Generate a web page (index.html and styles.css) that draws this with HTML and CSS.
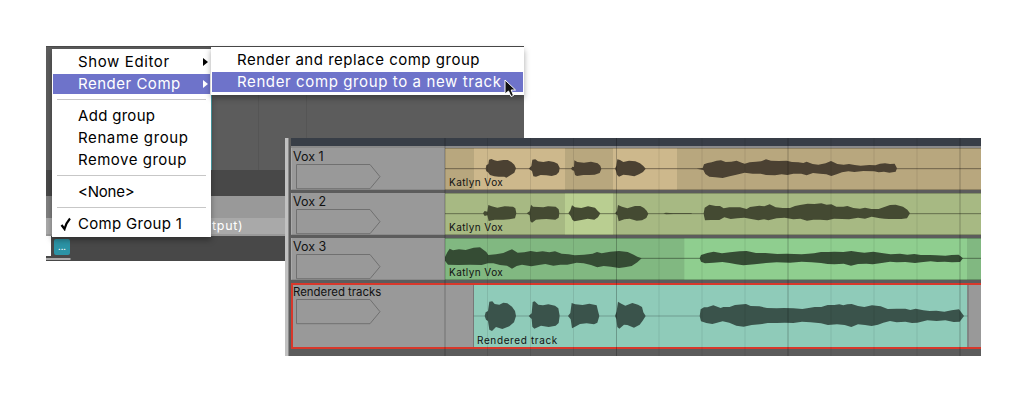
FILE: index.html
```
<!DOCTYPE html>
<html lang="en">
<head>
<meta charset="utf-8">
<title>Comp group rendering</title>
<link rel="stylesheet" href="styles.css">
</head>
<body>
<main class="desktop">
  <section class="mixer">
    <div class="mixer-canvas"></div>
    <div class="mixer-gap"></div>
    <div class="mixer-row"></div>
    <div class="mixer-output">tput)</div>
    <div class="mixer-foot"><span class="field"></span><button class="more">...</button></div>
    <div class="mixer-edge"></div>
  </section>

  <section class="arranger">
    <div class="ruler"></div>
    <div class="ruler-edge"></div>
    <div class="track">
      <header class="track-head"><span class="track-name n1">Vox 1</span><svg class="tag" viewBox="0 0 85 26"><path d="M.5.5H74L84 12.7 74 24.7H.5Z"/></svg></header>
      <div class="lane tan">
        <svg class="wave" viewBox="15 45 1608 126" preserveAspectRatio="none">
          <path fill="#cdb88c" d="M102 45H375V171H102ZM519 45H711V171H519Z"/>
          <path class="axis" d="M15 107H1623"/>
          <path d="M137 107L139 97 145 93 147 80 154 78 163 82 172 84 190 81 203 81 214 87 223 95 228 106 223 119 211 127 199 134 193 131 176 131 163 130 150 126 144 118 139 115Z"/>
          <path d="M266 107L274 99 277 80 286 79 294 85 310 87 326 84 342 87 353 92 359 104 357 117 349 125 335 129 319 127 302 126 288 131 280 130 276 114Z"/>
          <path d="M393 107L397 101 402 102 403 82 412 87 432 89 453 86 473 91 481 98 484 108 479 120 464 125 448 126 430 126 411 129 405 126 402 113 397 112Z"/>
          <path d="M525 107L529 98 532 79 540 81 550 87 567 83 586 85 600 91 610 99 617 107 609 117 597 124 583 130 565 127 550 125 537 131 531 125 528 113Z"/>
          <path transform="translate(660 0)" d="M110 107L128 105 132 94 143 90 155 88 170 83 183 82 197 87 214 86 230 83 245 89 254 92 269 88 288 86 303 85 318 79 333 83 356 84 380 83 396 87 415 88 430 90 440 86 458 93 475 95 497 91 513 84 532 93 551 95 567 93 584 96 602 98 628 96 646 97 660 92 675 91 690 93 704 92 711 106 707 116 688 119 672 116 656 118 642 115 610 114 583 117 565 115 546 118 530 124 514 129 499 124 480 122 459 120 440 127 424 122 400 122 382 126 365 124 345 127 318 126 302 122 278 122 254 119 229 125 209 130 188 135 166 133 148 131 136 123 130 111Z"/>
        </svg><span class="clip-name">Katlyn Vox</span>
      </div>
    </div>
    <div class="track">
      <header class="track-head"><span class="track-name n1">Vox 2</span><svg class="tag" viewBox="0 0 85 26"><path d="M.5.5H74L84 12.7 74 24.7H.5Z"/></svg></header>
      <div class="lane olive">
        <svg class="wave" viewBox="15 180 1608 126" preserveAspectRatio="none">
          <path fill="#b9ce91" d="M375 180H519V306H375Z"/>
          <path class="axis" d="M15 242H1623"/>
          <path d="M129 241L134 234 142 236 145 216 155 220 172 224 194 220 219 221 226 226 229 241 225 256 208 259 190 260 164 260 146 264 142 247 134 249Z"/>
          <path d="M260 241L269 235 273 215 279 221 295 222 310 223 324 220 347 221 356 229 358 240 356 254 346 260 319 258 304 259 288 260 276 269 271 265 269 247Z"/>
          <path d="M385 241L391 232 396 217 405 223 424 225 444 220 465 224 473 233 481 241 474 253 463 260 443 257 424 261 403 265 397 260 392 249Z"/>
          <path d="M525 241L531 234 534 216 546 221 562 226 585 219 601 219 612 225 620 233 625 242 619 255 606 262 590 263 569 257 553 259 536 265 532 247Z"/>
          <path d="M670 241L678 239 700 241 755 241 755 243 700 243 678 244Z"/>
          <path transform="translate(660 0)" d="M131 241L134 224 148 215 167 219 180 219 191 226 208 223 240 223 260 228 270 222 298 218 313 220 329 214 347 223 368 225 390 225 405 219 420 216 443 212 463 213 484 211 500 215 514 214 529 221 550 221 562 219 580 225 600 227 615 224 634 228 656 228 673 222 690 216 707 215 729 221 742 230 750 241 741 256 724 258 705 258 687 258 673 257 660 256 635 251 615 257 594 254 567 259 546 258 522 257 502 262 480 260 460 260 441 263 421 257 400 259 374 254 350 256 325 262 312 259 295 262 278 259 253 254 232 256 212 258 193 253 178 261 151 261 135 262 132 248Z"/>
        </svg><span class="clip-name">Katlyn Vox</span>
      </div>
    </div>
    <div class="track">
      <header class="track-head"><span class="track-name n1">Vox 3</span><svg class="tag" viewBox="0 0 85 26"><path d="M.5.5H74L84 12.7 74 24.7H.5Z"/></svg></header>
      <div class="lane green">
        <svg class="wave" viewBox="15 15 1608 126" preserveAspectRatio="none">
          <path fill="#8fce8f" d="M733 15H1581V141H733Z"/>
          <path class="axis" d="M15 76H1623"/>
          <path d="M15 72L22 58 29 47 39 52 57 49 77 51 101 44 120 43 131 51 139 57 145 66 168 64 190 60 205 53 216 49 233 59 253 58 272 54 290 57 308 55 328 58 345 55 365 62 386 64 404 67 432 65 458 62 471 57 485 61 511 56 537 54 563 57 581 65 592 71 605 76 592 88 575 99 554 103 537 105 513 101 491 99 472 103 453 96 431 91 410 89 382 95 361 95 340 98 316 93 296 96 274 100 246 95 230 99 216 107 201 98 180 96 160 91 144 91 125 96 91 95 55 96 24 95 15 83Z"/>
          <path transform="translate(660 0)" d="M119 76L123 66 142 60 161 56 186 61 210 58 239 55 260 54 288 60 316 60 352 63 380 62 425 64 445 62 462 61 483 57 505 57 523 56 550 57 574 54 594 57 613 59 640 56 670 61 692 64 720 62 742 65 763 63 782 66 810 66 829 67 856 68 875 66 896 65 909 76 900 87 876 88 854 86 832 87 812 85 783 88 765 90 736 87 710 88 690 86 665 90 638 94 619 92 594 93 573 98 551 92 523 94 503 93 483 90 455 88 425 86 390 89 350 88 318 90 284 94 250 97 229 94 209 90 187 87 160 89 135 91 123 86Z"/>
        </svg><span class="clip-name">Katlyn Vox</span>
      </div>
    </div>
    <div class="track rendered">
      <header class="track-head"><span class="track-name n4">Rendered tracks</span><svg class="tag" viewBox="0 0 85 26"><path d="M.5.5H74L84 12.7 74 24.7H.5Z"/></svg></header>
      <div class="lane teal">
        <svg class="wave" viewBox="15 153 1608 186" preserveAspectRatio="none">
          <path fill="#8fcbb9" d="M101 153H1582V339H101Z"/>
          <path fill="#777" d="M99 153H102V339H99ZM1582 153H1586V339H1582Z"/>
          <path class="axis pale" d="M101 246H1584"/>
          <path d="M134 246L137 235 144 231 148 203 157 202 164 210 178 212 190 206 202 208 216 218 225 231 228 246 222 265 208 277 187 285 168 279 156 291 148 287 144 261 138 257Z"/>
          <path d="M266 246L275 238 278 204 284 202 295 212 309 214 325 211 345 215 355 223 359 245 356 267 347 275 326 279 303 275 283 284 277 278 275 255Z"/>
          <path d="M384 246L391 237 395 207 406 211 428 213 448 209 470 214 474 231 478 246 472 266 462 271 440 268 420 270 405 278 396 283 392 256Z"/>
          <path d="M525 246L530 232 534 203 544 209 556 215 577 207 594 212 606 219 610 235 617 246 608 260 599 272 582 281 562 273 552 272 538 284 532 279 529 255Z"/>
          <path transform="translate(660 0)" d="M119 246L122 226 132 220 142 220 160 214 182 222 190 219 209 219 225 213 258 210 272 216 298 217 321 222 350 223 372 222 400 223 427 225 446 222 464 219 484 219 503 213 523 213 538 211 550 214 562 211 575 210 594 216 613 219 636 214 662 217 683 225 710 224 736 224 751 228 767 224 790 229 809 231 829 230 853 233 875 229 897 226 912 246 899 263 881 264 856 259 830 261 802 259 772 266 756 267 736 263 710 265 690 261 670 266 654 272 635 276 615 273 594 271 574 279 554 273 531 271 504 273 483 268 452 265 426 263 400 267 374 266 350 267 323 267 300 271 275 273 251 278 229 275 208 266 188 262 157 270 139 267 123 262Z"/>
        </svg><span class="clip-name last">Rendered track</span>
      </div>
    </div>
    <div class="arranger-foot"></div>
    <svg class="grid" viewBox="445 138 536 218"><path d="M487.5 138V356M530.5 138V356M573.5 138V356M659 138V356M702 138V356M745 138V356M831 138V356M874 138V356M917 138V356"/><path class="bar" d="M445 138V356M616.5 138V356M788 138V356M960 138V356"/></svg>
  </section>

  <nav class="menu main-menu">
    <div class="item"><span class="wide">Show Editor</span><i class="arrow"></i></div>
    <div class="item active"><span class="medium">Render Comp</span><i class="arrow"></i></div>
    <hr>
    <div class="item"><span>Add group</span></div>
    <div class="item"><span class="wide">Rename group</span></div>
    <div class="item"><span class="medium">Remove group</span></div>
    <hr>
    <div class="item"><span class="narrow">&lt;None&gt;</span></div>
    <hr>
    <div class="item checked"><svg class="check" viewBox="0 0 12 14"><path d="M1.5 8 4.5 12Q6 6 10 1.5"/></svg><span>Comp Group 1</span></div>
  </nav>
  <nav class="menu sub-menu">
    <div class="item"><span class="medium">Render and replace comp group</span></div>
    <div class="item active"><span class="wide">Render comp group to a new track</span></div>
  </nav>
  <svg class="cursor" viewBox="0 0 13 19"><path d="M1 1V15L4.5 12 7 17.5 9.5 16.5 7.2 11H11.5Z"/></svg>
</main>
</body>
</html>
```
FILE: styles.css
```
* { box-sizing: border-box; }
body { margin: 0; background: #fff; font-family: Inter, "Noto Sans", sans-serif; }
.desktop { position: relative; width: 1027px; height: 402px; overflow: hidden; }

.mixer { position: absolute; left: 46px; top: 46px; width: 478px; height: 215px; display: flex; flex-direction: column; }
.mixer > div { width: 239px; flex: none; }
.mixer > .mixer-canvas { width: 478px; height: 124px; background: linear-gradient(90deg, transparent 165px, #4fa9b4 165px 166px, transparent 166px 212px, #555 212px 213px, transparent 213px 260px, #555 260px 261px, transparent 261px), #5c5c5c; border-top: 1px solid #4a4a4a; }
.mixer-gap { height: 26px; background: #484848; }
.mixer-row { height: 22px; background: linear-gradient(90deg, #7f7f7f 6px, #999 6px); }
.mixer-output { height: 18px; background: linear-gradient(#a9a9a9 16px, #999 16px); color: #fff; font: 12.5px/16px Inter, sans-serif; padding-left: 166px; letter-spacing: .7px; }
.mixer-foot { height: 20px; background: #484848; display: flex; gap: 3px; align-items: flex-start; }
.field { width: 5px; height: 20px; background: #fff; }
.more { width: 16px; height: 16px; margin-top: 3px; padding: 0; border: 0; border-radius: 2px; background: #2b93a5; color: #fff; font: 9px/12px Inter, sans-serif; }
.mixer-edge { height: 5px; background: linear-gradient(#555 1px, transparent 1px 2px, #484848 2px) 0 0 / 0 0 no-repeat, linear-gradient(90deg, #aaa 24px, #484848 25px) 0 2px / 100% 2px no-repeat, #484848; }

.arranger { position: absolute; left: 285px; top: 138px; width: 696px; height: 218px; background: linear-gradient(90deg, #c1c1c1 3px, #8b8b8b 3px 4px, #5c5c5c 4px); padding-left: 6px; display: flex; flex-direction: column; }
.ruler { height: 8px; background: #383e47; }
.ruler-edge { height: 3px; background: #8a8a8a; }
.track { height: 42px; margin-bottom: 3px; display: flex; flex: none; }
.track-head { width: 154px; background: #999; display: flex; flex-direction: column; color: #111; border-left: 1px solid #aaa; border-bottom: 1px solid #8a8a8a; }
.track-name { height: 16px; flex: none; line-height: 17px; font-size: 12.5px; padding-left: 1px; white-space: nowrap; }
.n4 { font-size: 11.4px; }
.tag { width: 85px; height: 26px; margin-left: 4px; display: block; overflow: visible; flex: none; }
.tag path { fill: none; stroke: #707070; }
.lane { flex: 1; position: relative; }
.lane::after { content: ""; position: absolute; inset: 0; border: solid rgba(0,0,0,.22); border-width: 1px 0; }
.tan { background: #b8a77e; color: #4b4132; }
.olive { background: #a7b983; color: #444a32; }
.green { background: #81b881; color: #354c34; }
.teal { background: #999; color: #3a534b; }
.wave { display: block; width: 100%; height: 100%; fill: currentColor; }
.axis { fill: none; stroke: currentColor; stroke-width: 2.5; opacity: .8; }
.pale { opacity: .45; }
.clip-name { position: absolute; left: 4px; bottom: 1px; color: #111; font-size: 10px; line-height: 14px; letter-spacing: .42px; white-space: nowrap; z-index: 2; }
.last { left: 32px; letter-spacing: .62px; }
.rendered { height: 66px; margin: 0; border: 2px solid #d8382b; border-right: 0; }
.rendered .track-head { width: 152px; border: 0; }
.rendered .tag { margin-left: 3px; }
.rendered .track-name { height: 14px; line-height: 14px; padding-left: 0; }
.rendered .lane::after { content: none; }
.rendered .clip-name { bottom: 0; }
.arranger-foot { height: 7px; }
.grid { position: absolute; left: 160px; top: 0; width: 536px; height: 218px; overflow: visible; }
.grid path { fill: none; stroke: #000; stroke-opacity: .09; }
.grid .bar { stroke-opacity: .25; }

.menu { position: absolute; background: #fff; padding: 2px 1px; color: #000; box-shadow: 0 3px 6px rgba(0,0,0,.35); }
.main-menu { left: 52px; top: 49px; width: 159px; height: 188px; }
.sub-menu { left: 211px; top: 47px; width: 313px; height: 48px; }
.item { height: 22px; padding-left: 25px; border: solid #fff; border-width: 1px 0; display: flex; align-items: center; font-size: 15px; line-height: 20px; letter-spacing: .3px; white-space: nowrap; }
.medium { letter-spacing: .51px; }
.wide { letter-spacing: .61px; }
.narrow { letter-spacing: -.2px; }
.active { background: #6e73ca; color: #fff; }
.menu hr { height: 1px; border: 0; margin: 4px 4px 5px; background: #c7c7c7; }
.arrow { margin-left: auto; margin-right: 2px; border-left: 5px solid currentColor; border-top: 4px solid transparent; border-bottom: 4px solid transparent; }
.checked { padding-left: 7px; }
.check { width: 12px; height: 14px; margin-right: 6px; fill: none; stroke: #000; stroke-width: 2.2; }
.cursor { position: absolute; left: 504px; top: 79px; width: 13px; height: 19px; fill: #111; stroke: #fff; stroke-width: 1; }
```
